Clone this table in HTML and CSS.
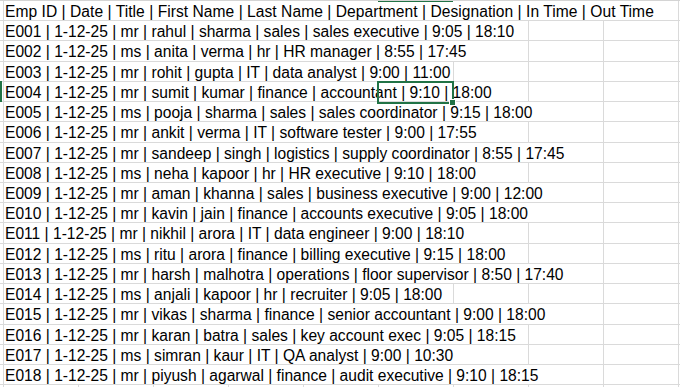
FILE: index.html
```html
<!DOCTYPE html>
<html lang="en">
<head>
<meta charset="utf-8">
<title>Sheet</title>
<link rel="stylesheet" href="styles.css">
</head>
<body>
<div class="sheet">
  <div class="row head"><span class="cell">Emp ID | Date | Title | First Name | Last Name | Department | Designation | In Time | Out Time</span></div>
  <div class="row"><span class="cell">E001 | 1-12-25 | mr | rahul | sharma | sales | sales executive | 9:05 | 18:10</span></div>
  <div class="row"><span class="cell">E002 | 1-12-25 | ms | anita | verma | hr | HR manager | 8:55 | 17:45</span></div>
  <div class="row"><span class="cell">E003 | 1-12-25 | mr | rohit | gupta | IT | data analyst | 9:00 | 11:00</span></div>
  <div class="row"><span class="cell">E004 | 1-12-25 | mr | sumit | kumar | finance | accountant | 9:10 | 18:00</span></div>
  <div class="row"><span class="cell">E005 | 1-12-25 | ms | pooja | sharma | sales | sales coordinator | 9:15 | 18:00</span></div>
  <div class="row"><span class="cell">E006 | 1-12-25 | mr | ankit | verma | IT | software tester | 9:00 | 17:55</span></div>
  <div class="row"><span class="cell">E007 | 1-12-25 | mr | sandeep | singh | logistics | supply coordinator | 8:55 | 17:45</span></div>
  <div class="row"><span class="cell">E008 | 1-12-25 | ms | neha | kapoor | hr | HR executive | 9:10 | 18:00</span></div>
  <div class="row"><span class="cell">E009 | 1-12-25 | mr | aman | khanna | sales | business executive | 9:00 | 12:00</span></div>
  <div class="row"><span class="cell">E010 | 1-12-25 | mr | kavin | jain | finance | accounts executive | 9:05 | 18:00</span></div>
  <div class="row"><span class="cell">E011 | 1-12-25 | mr | nikhil | arora | IT | data engineer | 9:00 | 18:10</span></div>
  <div class="row"><span class="cell">E012 | 1-12-25 | ms | ritu | arora | finance | billing executive | 9:15 | 18:00</span></div>
  <div class="row"><span class="cell">E013 | 1-12-25 | mr | harsh | malhotra | operations | floor supervisor | 8:50 | 17:40</span></div>
  <div class="row"><span class="cell">E014 | 1-12-25 | ms | anjali | kapoor | hr | recruiter | 9:05 | 18:00</span></div>
  <div class="row"><span class="cell">E015 | 1-12-25 | mr | vikas | sharma | finance | senior accountant | 9:00 | 18:00</span></div>
  <div class="row"><span class="cell">E016 | 1-12-25 | mr | karan | batra | sales | key account exec | 9:05 | 18:15</span></div>
  <div class="row"><span class="cell">E017 | 1-12-25 | ms | simran | kaur | IT | QA analyst | 9:00 | 10:30</span></div>
  <div class="row"><span class="cell">E018 | 1-12-25 | mr | piyush | agarwal | finance | audit executive | 9:10 | 18:15</span></div>
  <div class="row"></div>
  <div class="col-mark"></div>
  <div class="row-mark"></div>
  <div class="selection"><span class="handle"></span></div>
</div>
</body>
</html>
```
FILE: styles.css
```css
html, body {
  margin: 0;
  padding: 0;
  background: #ffffff;
}
body {
  font-family: "Liberation Sans", Arial, sans-serif;
  font-size: 15.6px;
  color: #000000;
  overflow: hidden;
}
.sheet {
  position: relative;
  width: 680px;
  height: 387px;
  overflow: hidden;
  border-top: 1px solid #d4d4d4;
  box-sizing: border-box;
}
.row {
  display: flex;
  height: 20.22px;
  box-sizing: border-box;
  border-bottom: 1px solid #dadada;
  padding-left: 4px;
  background-image: linear-gradient(to right, #dadada 0, #dadada 1px, transparent 1px);
  background-size: 75px 100%;
  background-position: 3px 0;
  background-repeat: repeat-x;
}
.cell {
  display: block;
  height: 100%;
  box-sizing: border-box;
  padding: 3px 2px 0 1px;
  line-height: 16px;
  white-space: nowrap;
  background: #ffffff;
}
.head .cell {
  letter-spacing: 0.04px;
}
.col-mark {
  position: absolute;
  top: -1px;
  left: 378px;
  width: 75px;
  height: 2px;
  background: #217346;
}
.row-mark {
  position: absolute;
  top: 80px;
  left: 0;
  width: 2px;
  height: 21px;
  background: #217346;
}
.selection {
  position: absolute;
  left: 377px;
  top: 80px;
  width: 77px;
  height: 23px;
  box-sizing: border-box;
  border: 2px solid #217346;
}
.handle {
  position: absolute;
  right: -4px;
  bottom: -4px;
  width: 5px;
  height: 5px;
  background: #217346;
  border: 1px solid #ffffff;
}
```
